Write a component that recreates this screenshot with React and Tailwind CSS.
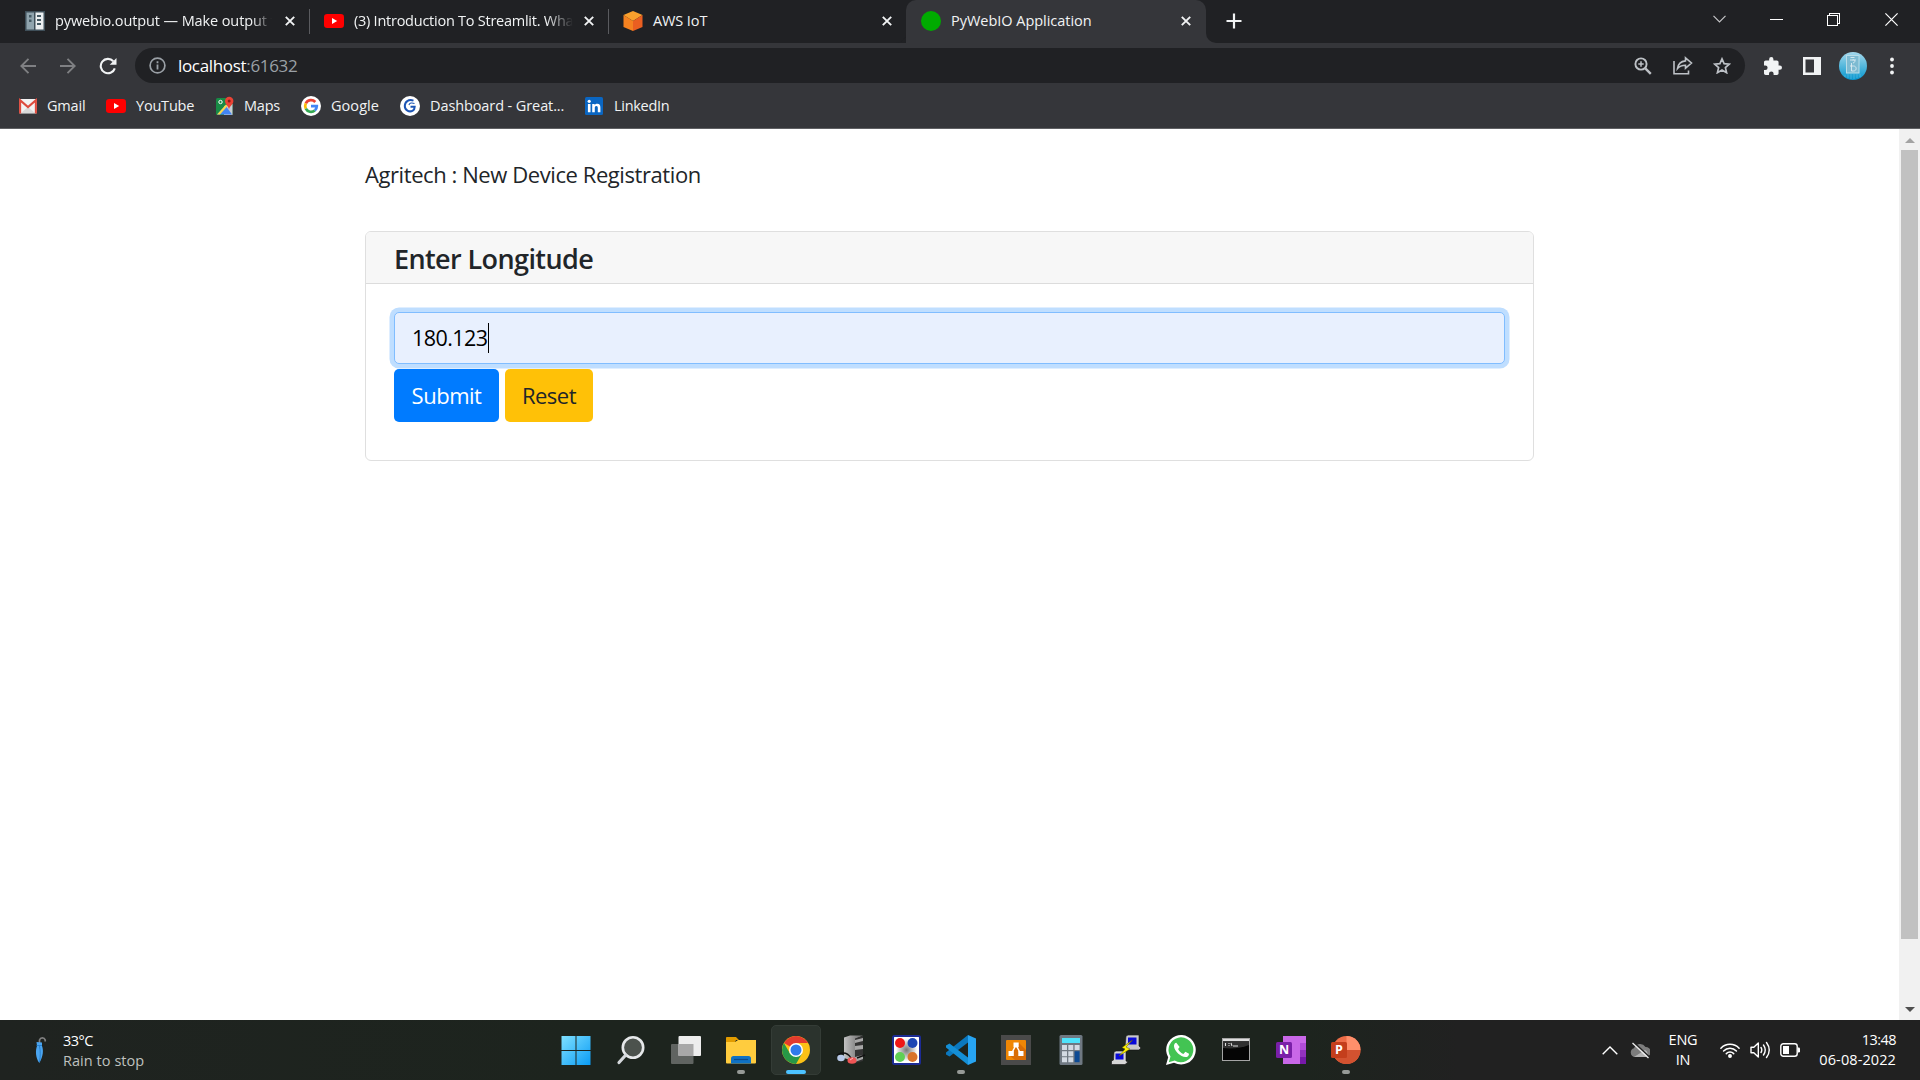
import React from "react";

function YouTubeIcon({ className }) {
  return (
    <svg viewBox="0 0 20 14" className={className}>
      <rect width="20" height="14" rx="3.2" fill="#f00" />
      <path d="M8 4v6l5.2-3z" fill="#fff" />
    </svg>
  );
}

function CloseX() {
  return (
    <svg viewBox="0 0 10 10" className="h-[10px] w-[10px] shrink-0">
      <path d="M.8.8l8.4 8.4M9.2.8L.8 9.2" stroke="#f1f3f4" strokeWidth="1.9" />
    </svg>
  );
}

function DocsIcon() {
  return (
    <svg viewBox="0 0 20 20" className="h-5 w-5">
      <rect width="20" height="20" fill="#3f4f59" />
      <rect x="1.5" y="1.5" width="7.5" height="17" fill="#90a4ae" />
      <rect x="10.5" y="1.5" width="8" height="17" fill="#eceff1" />
      <path d="M4 4h2.5v2.5H4zM4 8.5h2.5V11H4zM12 4h4v2h-4zM12 8h4v2h-4zM12 12h4v2h-4z" fill="#455a64" />
    </svg>
  );
}

function AwsIcon() {
  return (
    <svg viewBox="0 0 20 20" className="h-5 w-5">
      <path d="M10 0l9.5 4L10 10 .5 4z" fill="#f9a02d" />
      <path d="M.5 4L10 10v10L.5 16z" fill="#f58220" />
      <path d="M19.5 4L10 10v10l9.5-4z" fill="#ea5f21" />
    </svg>
  );
}

function GmailIcon() {
  return (
    <svg viewBox="0 0 18 16" className="h-4 w-[18px]">
      <rect y="1" width="18" height="14.5" rx="1.5" fill="#f2f2f2" />
      <path d="M2 15l7-6 7 6z" fill="#d9d9d9" />
      <path d="M1.1 15.5V2.2L9 9l7.9-6.8v13.3" fill="none" stroke="#dd4b3e" strokeWidth="2.1" />
    </svg>
  );
}

function MapsIcon() {
  return (
    <svg viewBox="0 0 18 20" className="h-5 w-[18px]">
      <rect y="2" width="16.5" height="17" rx="1.5" fill="#188b45" />
      <path d="M8 10l8.5-2v11H8z" fill="#c8ced4" />
      <path d="M1 18.5l8.5-9 6.5 9z" fill="#4285f4" />
      <path d="M1 18.5l9-10 1.5 1.5-7.5 8.5z" fill="#f9d84d" />
      <circle cx="4.5" cy="6" r="1.7" fill="none" stroke="#fff" strokeWidth="1" />
      <path d="M13 14c0-4-4-5-4-9a4.2 4.2 0 018.4 0c0 4-4.4 5-4.4 9z" fill="#ea4335" />
      <circle cx="13.2" cy="5" r="1.5" fill="#8c1d18" />
    </svg>
  );
}

function GoogleIcon() {
  return (
    <svg viewBox="0 0 20 20" className="h-5 w-5">
      <circle cx="10" cy="10" r="10" fill="#fff" />
      <g fill="none" strokeWidth="2.7">
        <path d="M14.3 6A5.8 5.8 0 004.8 7.4" stroke="#ea4335" />
        <path d="M4.8 7.4a5.8 5.8 0 000 5.2" stroke="#fbbc05" />
        <path d="M4.8 12.6a5.8 5.8 0 009 1.8" stroke="#34a853" />
        <path d="M13.8 14.4c1.3-1.1 2-2.6 2-4.2H10" stroke="#4285f4" />
      </g>
    </svg>
  );
}

function GreatIcon() {
  return (
    <svg viewBox="0 0 20 20" className="h-5 w-5">
      <circle cx="10" cy="10" r="10" fill="#fff" />
      <path d="M13.5 4.6C8.5 2.8 4.8 5.8 4.8 10c0 4.3 4.4 6.6 8 4.6 1.3-.8 1.900-2 1.900-3.800h-4.200" fill="none" stroke="#1c55b5" strokeWidth="2" />
      <path d="M14.5 7.6c-2.8-1.3-4.8-.6-5.6 1.4" fill="none" stroke="#1c55b5" strokeWidth="1.1" />
    </svg>
  );
}

function LinkedInIcon() {
  return (
    <svg viewBox="0 0 18 18" className="h-[18px] w-[18px]">
      <rect width="18" height="18" rx="1.5" fill="#0a66c2" />
      <circle cx="4.2" cy="4.3" r="1.6" fill="#fff" />
      <path d="M2.9 7h2.6v8.2H2.9zM7.2 7h2.5v1.2c.5-.9 1.5-1.4 2.6-1.4 2.4 0 3.1 1.5 3.1 3.9v4.5h-2.6v-4c0-1.2-.2-2.2-1.4-2.2s-1.6.9-1.6 2.1v4.1H7.2z" fill="#fff" />
    </svg>
  );
}

function TabStrip() {
  return (
    <div className="flex h-[43px] items-start bg-[#202124] text-[14.5px] text-[#f1f3f4]">
      <div className="flex h-[42px] w-[309px] items-center pl-[25px]">
        <DocsIcon />
        <span className="mr-[4px] ml-[10px] w-[217px] overflow-hidden whitespace-nowrap tracking-[-0.1px] [mask-image:linear-gradient(to_right,#000_91%,transparent)]">
          pywebio.output — Make output f
        </span>
        <span className="ml-[9px] flex"><CloseX /></span>
      </div>
      <div className="mt-[9px] h-[25px] w-px bg-[#5a5b5f]" />
      <div className="flex h-[42px] w-[298px] items-center pl-[14px]">
        <YouTubeIcon className="h-[14px] w-5" />
        <span className="ml-[10px] w-[219px] overflow-hidden whitespace-nowrap tracking-[-0.25px] [mask-image:linear-gradient(to_right,#000_88%,transparent)]">
          (3) Introduction To Streamlit. Wha
        </span>
        <span className="ml-[11px] flex"><CloseX /></span>
      </div>
      <div className="mt-[9px] h-[25px] w-px bg-[#5a5b5f]" />
      <div className="flex h-[43px] w-[297px] items-center rounded-br-[10px] bg-[#202124] pb-px pl-[14px]">
        <AwsIcon />
        <span className="ml-[10px] w-[219px] whitespace-nowrap tracking-[-0.1px]">AWS IoT</span>
        <span className="ml-[10px] flex"><CloseX /></span>
      </div>
      <div className="flex h-[43px] bg-[#35363a]">
        <div className="-ml-[10px] h-[43px] w-[10px] rounded-br-[10px] bg-[#202124]" />
        <div className="h-[43px] w-[300px] bg-[#202124]">
          <div className="flex h-[43px] w-[300px] items-center rounded-t-[10px] bg-[#35363a] pb-px pl-[15px]">
            <div className="h-5 w-5 rounded-full bg-[#00ab00]" />
            <span className="ml-[10px] w-[220px] whitespace-nowrap tracking-[-0.03px]">PyWebIO Application</span>
            <span className="ml-[10px] flex"><CloseX /></span>
          </div>
        </div>
        <div className="h-[43px] w-[20px] rounded-bl-[10px] bg-[#202124]" />
      </div>
      <svg viewBox="0 0 16 16" className="mt-[13px] h-4 w-4">
        <path d="M8 .5v15M.5 8h15" stroke="#f1f3f4" strokeWidth="2.2" />
      </svg>
      <div className="mr-[22px] ml-auto flex h-[38px] items-center">
        <svg viewBox="0 0 13 8" className="mr-[44px] h-2 w-[13px]">
          <path d="M.5.8l6 6 6-6" fill="none" stroke="#c4c5c7" strokeWidth="1.2" />
        </svg>
        <div className="mr-[44px] h-px w-[13px] bg-white" />
        <svg viewBox="0 0 13 13" className="mr-[45px] h-[13px] w-[13px]" shapeRendering="crispEdges">
          <path d="M.5 2.5h10v10H.5zM2.5 2.5v-2h10v10h-2" fill="none" stroke="#fff" />
        </svg>
        <svg viewBox="0 0 13 13" className="h-[13px] w-[13px]">
          <path d="M.4.4l12.2 12.2M12.6.4L.4 12.6" stroke="#fff" strokeWidth="1.2" />
        </svg>
      </div>
    </div>
  );
}

function Toolbar() {
  return (
    <div className="flex h-[45px] items-center bg-[#35363a]">
      <svg viewBox="0 0 16 16" className="ml-5 h-4 w-4">
        <path d="M16 8H1.5M8.5.8L1.3 8l7.2 7.2" fill="none" stroke="#7f8083" strokeWidth="1.9" />
      </svg>
      <svg viewBox="0 0 16 16" className="ml-[24px] h-4 w-4">
        <path d="M0 8h14.5M7.5.8L14.7 8l-7.2 7.2" fill="none" stroke="#7f8083" strokeWidth="1.9" />
      </svg>
      <svg viewBox="0 0 18 18" className="ml-[23px] h-[18px] w-[18px]">
        <path d="M15.8 11.3A7.2 7.2 0 1114.3 4.2" fill="none" stroke="#f1f3f4" strokeWidth="2.1" />
        <path d="M17.5 1v6.800h-6.800z" fill="#f1f3f4" />
      </svg>
      <div className="ml-[18px] flex h-[35px] w-[1610px] items-center rounded-full bg-[#202124] pr-[14px] pl-[14px]">
        <svg viewBox="0 0 17 17" className="h-[17px] w-[17px]">
          <circle cx="8.5" cy="8.5" r="7.4" fill="none" stroke="#9aa0a6" strokeWidth="1.7" />
          <path d="M8.5 7.6v4.9M8.5 4.3v1.9" stroke="#9aa0a6" strokeWidth="1.8" />
        </svg>
        <span className="ml-3 text-[17px] tracking-[-0.33px] text-white">
          localhost<span className="text-[#9aa0a6]">:61632</span>
        </span>
        <svg viewBox="0 0 18 18" className="ml-auto h-[18px] w-[18px]" fill="none" stroke="#bdc1c6">
          <circle cx="7" cy="7" r="5.6" strokeWidth="1.9" />
          <path d="M11.3 11.3l5.5 5.5" strokeWidth="2.4" />
          <path d="M7 4.3v5.4M4.3 7h5.4" strokeWidth="1.5" />
        </svg>
        <svg viewBox="0 0 20 19" className="ml-[21px] h-[19px] w-5" fill="none" stroke="#bdc1c6" strokeWidth="1.6">
          <path d="M1 5v12.8h14.5V14.5" />
          <path d="M12.5 1.8L18.5 7l-6 5.2V9.2c-3.5 0-6 .8-8 3.3.6-4.2 3-7 8-7.6z" />
        </svg>
        <svg viewBox="0 0 18 17" className="ml-[20px] h-[17px] w-[18px]">
          <path d="M9 1.900l2.100 4.800 5.200.5-3.900 3.400 1.200 5.100L9 13l-4.600 2.700 1.200-5.100-3.900-3.400 5.200-.5z" fill="none" stroke="#bdc1c6" strokeWidth="1.7" />
        </svg>
      </div>
      <svg viewBox="2 1 21 21" className="ml-[19px] h-[18px] w-[18px]">
        <path fill="#f1f3f4" d="M20.5 11H19V7c0-1.100-.9-2-2-2h-4V3.500a2.500 2.500 0 00-5 0V5H4c-1.100 0-2 .9-2 2v3.800h1.500a2.700 2.700 0 010 5.400H2V20c0 1.100.9 2 2 2h3.800v-1.500a2.700 2.700 0 015.400 0V22H17c1.100 0 2-.9 2-2v-4h1.500a2.500 2.500 0 000-5z" />
      </svg>
      <svg viewBox="0 0 18 18" className="ml-[21px] h-[18px] w-[18px]">
        <path d="M0 0h18v18H0zM2.5 2.5v13H11v-13z" fill="#f1f3f4" fillRule="evenodd" />
      </svg>
      <svg viewBox="0 0 28 28" className="ml-[18px] h-7 w-7">
        <defs>
          <linearGradient id="avatar" x2="0" y2="1">
            <stop offset="0" stopColor="#a5d8ec" />
            <stop offset=".5" stopColor="#55b8dc" />
            <stop offset="1" stopColor="#0796cf" />
          </linearGradient>
        </defs>
        <circle cx="14" cy="14" r="14" fill="url(#avatar)" />
        <rect x="7.5" y="3.5" width="12.5" height="17.5" fill="#7dbbd2" stroke="#b9dce8" />
        <path d="M11.5 5.5h4M11 8h6M12.5 11v8h2c3.500 0 3.500-5 0-5h-3.500M14 11c3-.5 2-4-.5-3" fill="none" stroke="#dcecf2" strokeWidth=".9" />
        <path d="M6 23v2M9 22v4M12 22v5M15 22v5M18 22v4M21 22v3" stroke="#52b7df" strokeWidth=".8" />
      </svg>
      <svg viewBox="0 0 4 18" className="ml-[23px] h-[18px] w-1" fill="#f1f3f4">
        <circle cx="2" cy="2.5" r="1.9" />
        <circle cx="2" cy="9" r="1.9" />
        <circle cx="2" cy="15.5" r="1.9" />
      </svg>
    </div>
  );
}

function Bookmarks() {
  return (
    <div className="flex h-[41px] items-center border-b border-[#5f6063] bg-[#35363a] pb-[4px] pl-[19px] text-[14.5px] whitespace-nowrap text-[#f1f3f4]">
      <GmailIcon />
      <span className="ml-[10px] w-[59px] tracking-[-0.2px]">Gmail</span>
      <YouTubeIcon className="h-[14px] w-5" />
      <span className="ml-[10px] w-[80px] tracking-[-0.2px]">YouTube</span>
      <MapsIcon />
      <span className="ml-[10px] w-[57px] tracking-[-0.2px]">Maps</span>
      <GoogleIcon />
      <span className="ml-[10px] w-[69px] tracking-[0.05px]">Google</span>
      <GreatIcon />
      <span className="ml-[10px] w-[155px] tracking-[-0.1px]">Dashboard - Great...</span>
      <LinkedInIcon />
      <span className="ml-[11px] tracking-[-0.3px]">LinkedIn</span>
    </div>
  );
}

function Page() {
  return (
    <main className="flex h-[891px] bg-white text-[#212529]">
      <div className="flex-1 pl-[365px]">
        <p className="mt-[28px] text-[22px] leading-[34px] tracking-[-0.42px]">Agritech : New Device Registration</p>
        <section className="mt-[40px] h-[230px] w-[1169px] rounded-[6px] border border-[#dfdfdf]">
          <h5 className="h-[52px] rounded-t-[5px] border-b border-[#dcdcdc] bg-[#f7f7f7] pl-[28px] text-[27px] leading-[53px] font-semibold tracking-[-0.6px]">
            Enter Longitude
          </h5>
          <div className="px-[28px] pt-[28px]">
            <div className="flex h-[52px] items-center rounded-[5px] border border-[#80bdff] bg-[#e8f0fe] pl-[17px] text-[21.5px] text-black shadow-[0_0_0_4.5px_#bfdeff]">
              <span className="pt-px tracking-[-0.55px]">180.123</span>
              <span className="h-[30px] w-px bg-black" />
            </div>
            <div className="mt-[5px] flex gap-[6px] text-[22px] tracking-[-0.5px]">
              <button className="h-[53px] w-[105px] rounded-[5px] bg-[#007bff] text-white">Submit</button>
              <button className="h-[53px] w-[88px] rounded-[5px] bg-[#ffc107]">Reset</button>
            </div>
          </div>
        </section>
      </div>
      <div className="flex w-[21px] flex-col items-center bg-[#f1f1f1]">
        <svg viewBox="0 0 10 5" className="mt-[9px] h-[5px] w-[10px]"><path d="M0 5l5-5 5 5z" fill="#a3a3a3" /></svg>
        <div className="mt-[7px] h-[789px] w-[17px] bg-[#c1c1c1]" />
        <svg viewBox="0 0 10 5" className="mt-auto mb-[8px] h-[5px] w-[10px]"><path d="M0 0h10L5 5z" fill="#505050" /></svg>
      </div>
    </main>
  );
}

function TaskCell({ children, active, running }) {
  return (
    <div className="relative flex h-[60px] w-[55px] items-center justify-center">
      {active && <div className="absolute inset-x-[2.5px] inset-y-[5px] rounded-[5px] border border-[#343c36] bg-[#2b332d]" />}
      <div className="relative flex">{children}</div>
      {running && <div className="absolute bottom-[6px] h-1 w-2 rounded-full bg-[#969a97]" />}
      {active && <div className="absolute bottom-[6px] h-1 w-5 rounded-full bg-[#4cc2ff]" />}
    </div>
  );
}

function Taskbar() {
  const icon = "h-[30px] w-[30px]";
  return (
    <footer className="flex h-[60px] items-center bg-[linear-gradient(90deg,#1f2320_0%,#1d241e_30%,#1d241e_68%,#212121_76%,#212121_100%)] text-[14.5px] text-white">
      <div className="flex w-[548px] items-center pl-[35px]">
        <svg viewBox="0 0 12 30" className="h-[30px] w-3">
          <path d="M4.5 8V5a3 3 0 015.7 0v1.5" fill="none" stroke="#808080" strokeWidth="1.7" />
          <path d="M1.5 7l5.500.5V11c1.500 4 1.500 10-2.700 17C.5 23 .3 15 2 11z" fill="#4ba5f0" />
          <path d="M4.5 11c1 5 1 10 0 16M1.5 10.5h5.5" stroke="#1f78c8" fill="none" strokeWidth=".8" />
        </svg>
        <div className="ml-4 flex flex-col pt-px leading-5">
          <span className="tracking-[-0.5px]">33°C</span>
          <span className="tracking-[0.05px] text-[#bfc1bf]">Rain to stop</span>
        </div>
      </div>
      <TaskCell>
        <svg viewBox="0 0 30 30" className={icon}>
          <defs>
            <linearGradient id="win" x2="1" y2="1"><stop stopColor="#7fe0ff" /><stop offset="1" stopColor="#0a9cf5" /></linearGradient>
          </defs>
          <path d="M.5 1h14v14H.5zM15.5 1h14v14h-14zM.5 16h14v14H.5zM15.5 16h14v14h-14z" fill="url(#win)" />
        </svg>
      </TaskCell>
      <TaskCell>
        <svg viewBox="0 0 30 30" className={icon}>
          <circle cx="17" cy="12.5" r="10.2" fill="#4c524d" stroke="#e6e8ea" strokeWidth="2.6" />
          <path d="M9.8 20L3 27.5" stroke="#d5d8dc" strokeWidth="3.2" strokeLinecap="round" />
        </svg>
      </TaskCell>
      <TaskCell>
        <svg viewBox="0 0 30 30" className={icon}>
          <rect y="9" width="22.5" height="20" rx="1" fill="#606461" />
          <rect x="7.5" y="1" width="22.5" height="20" rx="1" fill="#ededed" />
          <path d="M7.5 9h15v12h-15z" fill="#a8a8a8" />
        </svg>
      </TaskCell>
      <TaskCell running>
        <svg viewBox="0 0 30 30" className={icon}>
          <path d="M0 2.5Q0 2 1 2h9l3 3h-3L8 9H0z" fill="#e29c00" />
          <path d="M0 7h9l3-2h18v22.5q0 1-1 1H1q-1 0-1-1z" fill="#ffcc3e" />
          <path d="M5 28.5v-5q0-2.5 2.5-2.5h15Q25 21 25 23.5v5z" fill="#0f72c4" />
          <path d="M8 24.5h14" stroke="#0a4a8c" strokeWidth="1.2" />
        </svg>
      </TaskCell>
      <TaskCell active>
        <svg viewBox="0 0 28 28" className="h-7 w-7">
          <circle cx="14" cy="14" r="14" fill="#fbc116" />
          <path d="M14 14L1.9 7A14 14 0 0126.1 7H14z" fill="#e33b2e" />
          <path d="M1.9 7A14 14 0 0014 28l6-10.5L14 14 8 17.5z" fill="#279847" />
          <circle cx="14" cy="14" r="7" fill="#fff" />
          <circle cx="14" cy="14" r="5.5" fill="#2f7bea" />
        </svg>
      </TaskCell>
      <TaskCell>
        <svg viewBox="0 0 30 30" className={icon}>
          <defs><linearGradient id="tower"><stop stopColor="#c2c2c2" /><stop offset="1" stopColor="#646464" /></linearGradient></defs>
          <path d="M8 2.5L14 .5h13l-7 3V27L8 23z" fill="url(#tower)" />
          <path d="M19 3.5l8-2.5v25l-8 2z" fill="#343434" />
          <path d="M19 5l8-2v3l-8 2zM19 11l8-1v4l-8 1zM19 22l8-2v4l-8 3z" fill="#a7a7a7" />
          <path d="M1 20q9-5 14 3M21 23l8-3" fill="none" stroke="#111" strokeWidth="1.4" />
          <ellipse cx="5" cy="23" rx="3.8" ry="3.3" fill="#b7c9e8" />
          <ellipse cx="16" cy="25.5" rx="4.5" ry="3.3" fill="#ef5555" />
          <path d="M14 25l3-2" stroke="#ffb5b5" />
        </svg>
      </TaskCell>
      <TaskCell>
        <svg viewBox="0 0 30 30" className={icon}>
          <defs><radialGradient id="panel"><stop stopColor="#777" /><stop offset=".8" stopColor="#fff" /></radialGradient></defs>
          <rect x="2" y="1" width="27" height="28" rx="1.5" fill="url(#panel)" stroke="#1c2b94" strokeWidth="2" />
          <circle cx="9" cy="8" r="5" fill="#ee1616" /><circle cx="21.5" cy="8" r="5" fill="#1c45b4" />
          <circle cx="9" cy="22" r="5" fill="#5fcf55" /><circle cx="21.5" cy="22" r="5" fill="#d9732b" />
        </svg>
      </TaskCell>
      <TaskCell running>
        <svg viewBox="0 0 30 30" className={icon}>
          <path d="M22 7.5L3.5 21.5 0 19.5v-2L22 0z" fill="#0b78be" />
          <path d="M22 22.5L3.5 8.5 0 10.5v2L22 30z" fill="#148fd6" />
          <path d="M22 0l8 3.5v23L22 30z" fill="#27a4f2" />
        </svg>
      </TaskCell>
      <TaskCell>
        <svg viewBox="0 0 30 30" className={icon}>
          <rect width="30" height="30" fill="#4a4a4a" />
          <rect x="5" y="5" width="20" height="20" rx="1" fill="#f08705" />
          <path d="M18 8l7 7v10H14l-6-5z" fill="#d96d05" />
          <path d="M15 10l-4.5 8.5M15 10l4.5 8.5" stroke="#fff" strokeWidth="1.5" />
          <path d="M12.5 7.5h5.2v4.8h-5.2zM7.5 16h5.3v5H7.5zM17.3 16h5.2v5h-5.2z" fill="#fff" />
        </svg>
      </TaskCell>
      <TaskCell>
        <svg viewBox="0 0 24 30" className="h-[30px] w-6">
          <rect x=".5" width="23" height="30" rx="1.5" fill="#6f7882" />
          <rect x="3" y="3" width="18" height="5" fill="#4fe3fb" />
          <path d="M3 10h5v5H3zM9.3 10h5v5h-5zM15.6 10h5v5h-5zM3 16.2h5v5H3zM9.3 16.2h5v5h-5zM3 22.3h5v5H3zM9.3 22.3h5v5h-5z" fill="#d3dae3" />
          <path d="M15.6 16.2h5v11h-5z" fill="#0d4a94" />
        </svg>
      </TaskCell>
      <TaskCell>
        <svg viewBox="0 0 30 30" className={icon}>
          <path d="M15 1l2-1h11v11l2 2-2 2H14v-3z" fill="#c9c9c9" stroke="#111" strokeWidth=".6" />
          <path d="M17 2.5h8.5v7H17z" fill="#0909d8" />
          <path d="M3 17l2-1h10v10l2 1-3 2.5H.5V26l2-1z" fill="#d6d6d6" stroke="#111" strokeWidth=".6" />
          <path d="M4.5 18.5h8v6h-8z" fill="#0909d8" />
          <path d="M21.5 5L11 12.5l3 1.5-6 7 11-7-4-2z" fill="#fff200" stroke="#5b5600" strokeWidth=".5" />
        </svg>
      </TaskCell>
      <TaskCell>
        <svg viewBox="0 0 30 30" className={icon}>
          <path d="M0 30l2.2-7.7A14.8 14.8 0 1115.2 29.6a15 15 0 01-7.2-1.8z" fill="#fff" />
          <path d="M2.8 27.2l1.7-5.7a12.4 12.4 0 114.2 4z" fill="#43c453" />
          <path d="M10.3 7.7c-1.2 0-2.5 1.6-2.3 3.6.5 5 6.5 10.5 11.5 10.8 1.9 0 3.7-1.4 3.5-3.4l-3.6-1.9-2 2.2c-2.3-.9-4.2-2.6-5.3-5l1.5-2z" fill="#fff" />
        </svg>
      </TaskCell>
      <TaskCell>
        <svg viewBox="0 0 28 23" className="mt-[-2px] h-[23px] w-7">
          <rect x=".5" y=".5" width="27" height="22" fill="#050505" stroke="#a5a5a5" />
          <path d="M1 1h26v2.3H1z" fill="#dedede" />
          <path d="M1 10c9 1 19 0 26-3V3.3H1z" fill="#303030" />
          <path d="M3.5 5v3M7 5v1M7 7v1M9 5l1 3M11 8h5" stroke="#ddd" strokeWidth="1.1" />
        </svg>
      </TaskCell>
      <TaskCell>
        <svg viewBox="0 0 30 30" className={icon}>
          <path d="M7 1h23v7l-6 0v21H7z" fill="#c967e8" />
          <path d="M24 8h6v7h-6z" fill="#b14bd8" /><path d="M24 15h6v7h-6z" fill="#9332bf" /><path d="M24 22h6v7h-6z" fill="#7719aa" />
          <rect y="7" width="16" height="16" rx="1.5" fill="#7a1fa8" />
          <text x="8" y="19.3" textAnchor="middle" fontSize="12.5" fontWeight="700" fill="#fff">N</text>
        </svg>
      </TaskCell>
      <TaskCell running>
        <svg viewBox="0 0 30 30" className={icon}>
          <circle cx="15.5" cy="15" r="14" fill="#ed6c47" />
          <path d="M15.5 1a14 14 0 0114 14h-14z" fill="#ff8f6b" />
          <path d="M1.5 15h28a14 14 0 01-28 0z" fill="#d35230" />
          <rect y="7" width="16" height="16" rx="1.5" fill="#c43e1c" />
          <text x="8" y="19.3" textAnchor="middle" fontSize="12.5" fontWeight="700" fill="#fff">P</text>
        </svg>
      </TaskCell>
      <div className="mr-6 ml-auto flex items-center">
        <svg viewBox="0 0 16 9" className="h-[9px] w-4"><path d="M.7 8.3L8 1l7.3 7.3" fill="none" stroke="#fff" strokeWidth="1.4" /></svg>
        <svg viewBox="0 0 20 17" className="ml-3 h-[17px] w-5">
          <path d="M5 15a4.5 4.5 0 01-1-8.8A6.5 6.5 0 0115.5 5 4.7 4.7 0 0116 15z" fill="#7d7d7d" />
          <path d="M4 15l11-7a4 4 0 011 7z" fill="#b3b3b3" />
          <path d="M3.5 0l16 15" stroke="#212121" strokeWidth="1.5" />
          <path d="M2.5 1l16 15" stroke="#eee" strokeWidth="1.3" />
        </svg>
        <div className="ml-[19px] flex w-[28px] flex-col items-center leading-5 tracking-[-0.2px]"><span>ENG</span><span>IN</span></div>
        <svg viewBox="0 0 20 16" className="ml-[23px] h-4 w-5" fill="none" stroke="#fff" strokeWidth="1.5" strokeLinecap="round">
          <path d="M.9 6.2a12.5 12.5 0 0118.2 0M3.6 9a8.8 8.8 0 0112.8 0M6.3 11.6a5.2 5.2 0 017.4 0" />
          <circle cx="10" cy="14" r="1.2" fill="#fff" />
        </svg>
        <svg viewBox="0 0 20 18" className="ml-[10px] h-[18px] w-5" fill="none" stroke="#fff" strokeWidth="1.4" strokeLinecap="round">
          <path d="M1 6.3h2.8L8.300 2v14l-4.500-4.300H1z" strokeLinejoin="round" />
          <path d="M11 6.5q1.6 2.5 0 5M13.5 4q3.5 5 0 10M16.5 1.5q5.5 7.5 0 15" />
        </svg>
        <svg viewBox="0 0 20 14" className="ml-[10px] h-[14px] w-5">
          <rect x=".8" y=".8" width="16.4" height="12.4" rx="2.5" fill="none" stroke="#fff" strokeWidth="1.4" />
          <rect x="3" y="3" width="6" height="8" fill="#fff" />
          <path d="M18 4.5h.8q1.2 0 1.2 1.2v2.6q0 1.200-1.200 1.200H18z" fill="#fff" />
        </svg>
        <div className="flex w-[96px] flex-col items-end leading-5"><span className="tracking-[-0.55px]">13:48</span><span className="tracking-[0.1px]">06-08-2022</span></div>
      </div>
    </footer>
  );
}

export default function App() {
  return (
    <div className="flex h-[1080px] w-[1920px] flex-col overflow-hidden font-['Open_Sans','Noto_Sans',sans-serif]">
      <TabStrip />
      <Toolbar />
      <Bookmarks />
      <Page />
      <Taskbar />
    </div>
  );
}
